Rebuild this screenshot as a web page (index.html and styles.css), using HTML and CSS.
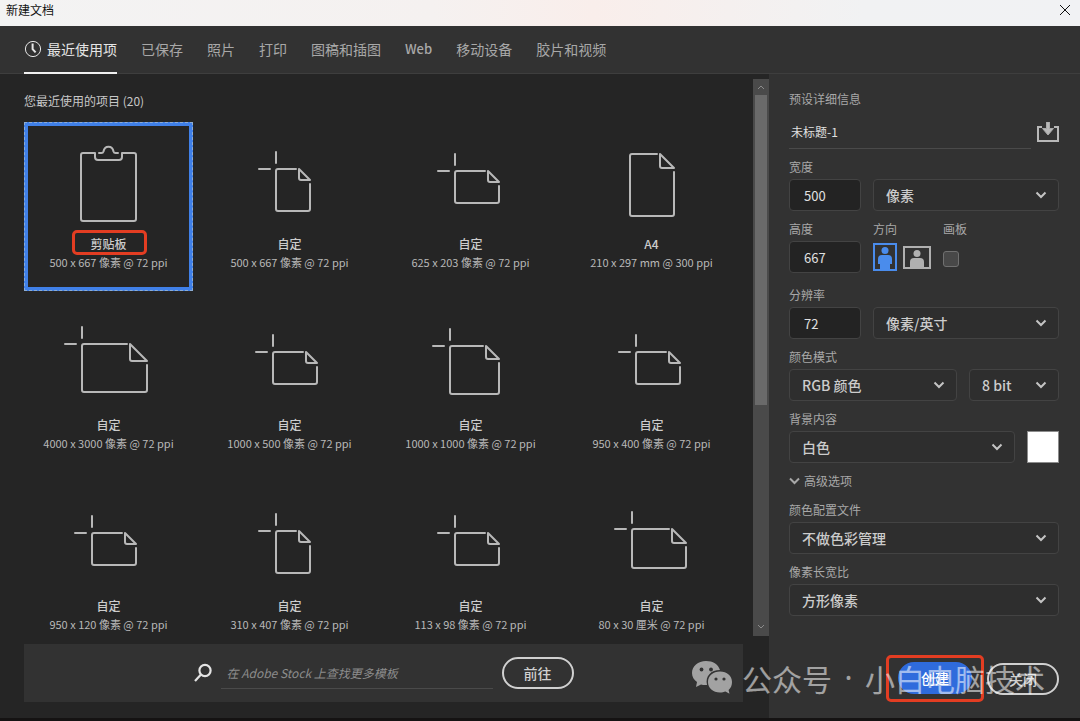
FILE: index.html
```html
<!DOCTYPE html>
<html lang="zh-CN">

<head>
    <title>新建文档</title>
    <meta charset="UTF-8">
    <meta name="viewport" content="width=device-width, initial-scale=1.0">
    <link rel="stylesheet" href="styles.css">
</head>

<body>
    <div class="window">
        <header class="titlebar">
            <span>新建文档</span>
            <button type="button" class="window-close" aria-label="关闭窗口">
                <svg width="12" height="12" viewBox="0 0 12 12"><path d="M1 1L11 11M11 1L1 11"/></svg>
            </button>
        </header>

        <nav class="tabs">
            <a href="#recent" class="tab active">
                <svg width="18" height="18" viewBox="0 0 18 18"><circle cx="9" cy="9" r="7.6"/><path d="M8.6 3.6V9.2L11.6 12.4" stroke-width="2"/></svg>
                最近使用项
            </a>
            <a href="#saved" class="tab">已保存</a>
            <a href="#photo" class="tab">照片</a>
            <a href="#print" class="tab">打印</a>
            <a href="#art" class="tab">图稿和插图</a>
            <a href="#web" class="tab latin">Web</a>
            <a href="#mobile" class="tab">移动设备</a>
            <a href="#film" class="tab">胶片和视频</a>
        </nav>

        <div class="content">
            <main class="main">
                <div class="scroller">
                    <section class="recent">
                        <h2>您最近使用的项目 (20)</h2>
                        <div id="presetGrid" class="preset-grid">
                            <button type="button" class="preset selected">
                                <svg class="preset-icon" viewBox="0 0 90 90">
                                    <path d="M31 13H19Q17 13 17 15V79Q17 81 19 81H70Q72 81 72 79V15Q72 13 70 13H58V17Q58 20 55 20H34Q31 20 31 17V13"/>
                                    <path d="M35 13H37.500Q39 13 39.500 11.500C40.500 5 48.500 5 49.500 11.500Q50 13 51.500 13H54"/>
                                </svg>
                                <span class="preset-name marked">剪贴板</span>
                                <span class="preset-size">500 x 667 像素 @ 72 ppi</span>
                            </button>
                        </div>
                    </section>
                    <div class="scrollbar">
                        <svg width="8" height="16" viewBox="0 0 8 16"><path d="M1 10L4 7L7 10"/></svg>
                        <div class="track"><div class="thumb"></div></div>
                        <svg width="8" height="16" viewBox="0 0 8 16"><path d="M1 5L4 8L7 5"/></svg>
                    </div>
                </div>

                <form class="search">
                    <svg width="18" height="20" viewBox="0 0 18 20"><circle cx="11" cy="7.500" r="5.600"/><path d="M7 11.500L1 18"/></svg>
                    <input type="text" aria-label="搜索模板" placeholder="在 Adobe Stock 上查找更多模板">
                    <button type="button" class="pill">前往</button>
                </form>
            </main>

            <aside class="details">
                <h3>预设详细信息</h3>
                <div class="doc-name">
                    <input type="text" aria-label="文档名称" value="未标题-1">
                    <button type="button" aria-label="保存预设">
                        <svg width="22" height="22" viewBox="0 0 22 22"><path d="M5 5H1V19H21V5H17" fill="none" stroke="#b8b8b8" stroke-width="2"/><path d="M9.500 0H12.500V6.500H16.500L11 13L5.500 6.500H9.500Z" fill="#b8b8b8"/></svg>
                    </button>
                </div>

                <div class="row">
                    <div class="field small">
                        <label for="width">宽度</label>
                        <input type="text" id="width" value="500">
                    </div>
                    <div class="field">
                        <select aria-label="单位">
                            <option>像素</option>
                        </select>
                    </div>
                </div>

                <div class="row height-row">
                    <div class="field small">
                        <label for="height">高度</label>
                        <input type="text" id="height" value="667">
                    </div>
                    <fieldset class="orientation">
                        <legend>方向</legend>
                        <div class="options">
                            <label class="portrait">
                                <input type="radio" name="orientation" aria-label="纵向" checked>
                                <svg width="24" height="28" viewBox="0 0 24 28"><rect x="1" y="1" width="22" height="26" fill="none" stroke="currentColor" stroke-width="2"/><circle cx="12" cy="7.500" r="3.500" fill="currentColor"/><path d="M5 16Q5 12 9 12H15Q19 12 19 16V21H17V27H7V21H5Z" fill="currentColor"/></svg>
                            </label>
                            <label class="landscape">
                                <input type="radio" name="orientation" aria-label="横向">
                                <svg width="28" height="23" viewBox="0 0 28 23"><rect x="1" y="1" width="26" height="21" fill="none" stroke="currentColor" stroke-width="2"/><circle cx="14" cy="7.500" r="3.500" fill="currentColor"/><path d="M7 22V16Q7 12 11 12H17Q21 12 21 16V22Z" fill="currentColor"/></svg>
                            </label>
                        </div>
                    </fieldset>
                    <div class="artboard">
                        <label for="artboard">画板</label>
                        <div class="options"><input type="checkbox" id="artboard"></div>
                    </div>
                </div>

                <div class="row">
                    <div class="field small">
                        <label for="resolution">分辨率</label>
                        <input type="text" id="resolution" value="72">
                    </div>
                    <div class="field">
                        <select aria-label="分辨率单位">
                            <option>像素/英寸</option>
                        </select>
                    </div>
                </div>

                <div class="row">
                    <div class="field">
                        <label for="mode">颜色模式</label>
                        <select id="mode">
                            <option>RGB 颜色</option>
                        </select>
                    </div>
                    <div class="field depth">
                        <select aria-label="位深度">
                            <option>8 bit</option>
                        </select>
                    </div>
                </div>

                <div class="row">
                    <div class="field">
                        <label for="background">背景内容</label>
                        <select id="background">
                            <option>白色</option>
                        </select>
                    </div>
                    <button type="button" class="swatch" aria-label="背景颜色"></button>
                </div>

                <button type="button" class="advanced">
                    <svg width="11" height="8" viewBox="0 0 11 8"><path d="M1 1.500L5.500 6L10 1.500"/></svg>
                    高级选项
                </button>

                <div class="row">
                    <div class="field">
                        <label for="profile">颜色配置文件</label>
                        <select id="profile">
                            <option>不做色彩管理</option>
                        </select>
                    </div>
                </div>

                <div class="row">
                    <div class="field">
                        <label for="ratio">像素长宽比</label>
                        <select id="ratio">
                            <option>方形像素</option>
                        </select>
                    </div>
                </div>

                <div class="actions">
                    <div class="create-mark"><button type="button" class="pill primary">创建</button></div>
                    <button type="button" class="pill">关闭</button>
                </div>
            </aside>
        </div>

        <div class="watermark">
            <svg width="42" height="36" viewBox="0 0 42 36">
                <path d="M15 1C7 1 1 6 1 13C1 17 3 20 6 22L5 27L10 24.500C12 25 14 25.300 16 25C14 16 20 10 29 10C27 4 22 1 15 1Z"/>
                <path d="M29 11.500C22 11.500 17 16 17 22C17 28 22 32.500 29 32.500C31 32.500 33 32 34.500 31.500L38.500 33.800L37.600 30C40 28 41 25 41 22C41 16 36 11.500 29 11.500Z"/>
                <g class="eyes"><circle cx="10.500" cy="9.500" r="1.900"/><circle cx="20" cy="9.500" r="1.900"/><circle cx="25" cy="19" r="1.600"/><circle cx="33" cy="19" r="1.600"/></g>
            </svg>
            <span>公众号</span><span class="dot">·</span><span>小白电脑技术</span>
        </div>
    </div>

    <script>
        // box: 左, 上, 右, 下, 折角大小
        const presets = [
            { name: '自定', size: '500 x 667 像素 @ 72 ppi', box: [31, 29, 65, 71, 11] },
            { name: '自定', size: '625 x 203 像素 @ 72 ppi', box: [29, 31, 73, 63, 11] },
            { name: 'A4', size: '210 x 297 mm @ 300 ppi', box: [23, 14, 67, 76, 14], plain: true },
            { name: '自定', size: '4000 x 3000 像素 @ 72 ppi', box: [18, 23, 83, 71, 17] },
            { name: '自定', size: '1000 x 500 像素 @ 72 ppi', box: [28, 31, 72, 63, 11] },
            { name: '自定', size: '1000 x 1000 像素 @ 72 ppi', box: [24, 25, 73, 73, 13] },
            { name: '自定', size: '950 x 400 像素 @ 72 ppi', box: [29, 31, 73, 63, 11] },
            { name: '自定', size: '950 x 120 像素 @ 72 ppi', box: [28, 31, 72, 63, 11] },
            { name: '自定', size: '310 x 407 像素 @ 72 ppi', box: [31, 29, 65, 71, 11] },
            { name: '自定', size: '113 x 98 像素 @ 72 ppi', box: [29, 31, 73, 63, 11] },
            { name: '自定', size: '80 x 30 厘米 @ 72 ppi', box: [25, 27, 79, 66, 14] }
        ];

        function iconPath(p) {
            const [l, t, r, b, f] = p.box;
            let d = `M${r - f - 3} ${t}H${l + 2}Q${l} ${t} ${l} ${t + 2}V${b - 2}Q${l} ${b} ${l + 2} ${b}H${r - 2}Q${r} ${b} ${r} ${b - 2}V${t + f + 4}`;
            // 折角
            d += `M${r - f} ${t}V${t + f - 2}Q${r - f} ${t + f} ${r - f + 2} ${t + f}H${r}Z`;
            // 十字线
            if (!p.plain) {
                d += `M${l} ${t - 17}V${t - 6}M${l - 17} ${t}H${l - 6}`;
            }
            return d;
        }

        const grid = document.getElementById('presetGrid');
        presets.forEach(p => {
            const card = document.createElement('button');
            card.type = 'button';
            card.className = 'preset';
            card.innerHTML = `<svg class="preset-icon" viewBox="0 0 90 90"><path d="${iconPath(p)}"/></svg>
                <span class="preset-name">${p.name}</span>
                <span class="preset-size">${p.size}</span>`;
            grid.appendChild(card);
        });
    </script>
</body>

</html>
```
FILE: styles.css
```css
* {
    box-sizing: border-box;
}

body {
    margin: 0;
    background: #111;
    color: #c8c8c8;
    font-family: "Noto Sans CJK SC", sans-serif;
    font-size: 12px;
    line-height: 18px;
}

button,
input,
select {
    margin: 0;
    padding: 0;
    border: 0;
    background: none;
    color: inherit;
    font: inherit;
}

svg {
    display: block;
    flex: none;
    fill: none;
    stroke: currentColor;
}

.window {
    position: relative;
    display: flex;
    flex-direction: column;
    height: 100vh;
    min-height: 700px;
    border-bottom: 3px solid #151313;
    background: #323232;
}

/* 标题栏 */
.titlebar {
    display: flex;
    justify-content: space-between;
    align-items: flex-start;
    height: 26px;
    flex: none;
    padding: 1px 9px 0 6px;
    background: linear-gradient(90deg, #f3f3f3 0%, #f5f1f0 40%, #f9eeeb 55%, #f1f2f3 80%, #f1f2f4 100%);
    color: #111;
}

.window-close {
    padding: 3px 0;
}

/* 标签 */
.tabs {
    display: flex;
    gap: 24px;
    flex: none;
    height: 48px;
    padding: 0 24px;
    border-bottom: 1px solid #3e3e3e;
    font-size: 14px;
}

.tab {
    display: flex;
    align-items: center;
    gap: 5px;
    height: 48px;
    border-bottom: 2px solid transparent;
    color: #a8a8a8;
    text-decoration: none;
    white-space: nowrap;
}

.tab.active {
    border-color: #f0f0f0;
    color: #e6e6e6;
}

.tab.latin {
    font-size: 13px;
    font-weight: 500;
}

.content {
    display: flex;
    flex: 1;
    min-height: 0;
}

.main {
    display: flex;
    flex-direction: column;
    flex: 1;
    min-width: 0;
    padding: 5px 0 16px 24px;
    background: #252525;
}

.scroller {
    display: flex;
    flex: 1;
    min-height: 0;
}

.recent {
    flex: 1;
    min-width: 0;
    padding: 13px 17px 0 0;
    overflow: hidden;
}

.recent h2 {
    margin: 0 0 12px;
    font-size: 12px;
    font-weight: 400;
}

.preset-grid {
    display: grid;
    grid-template-columns: repeat(4, 1fr);
    gap: 12px;
}

.preset {
    display: flex;
    flex-direction: column;
    align-items: center;
    height: 169px;
    padding-top: 14px;
    border: 4px solid transparent;
    color: #b8b8b8;
    white-space: nowrap;
}

.preset.selected {
    border-color: #4080e8;
    outline: 1px dashed #8cacd4;
    outline-offset: -1px;
}

.preset-icon {
    width: 90px;
    height: 90px;
    margin-bottom: 5px;
    stroke-width: 2;
    stroke-linecap: round;
    stroke-linejoin: round;
}

.preset-name {
    position: relative;
    color: #cccccc;
    font-weight: 500;
}

.preset-size {
    font-size: 11px;
}

.preset-name.marked::after {
    content: "";
    position: absolute;
    inset: -5px -20px -2px -18px;
    border: 3px solid #e33d22;
    border-radius: 5px;
}

/* 滚动条 */
.scrollbar {
    display: flex;
    flex-direction: column;
    align-items: center;
    width: 16px;
    background: #4a4a4a;
    color: #8c8c8c;
}

.track {
    flex: 1;
    width: 12px;
}

.thumb {
    height: 59%;
    background: #6a6a6a;
}

.search {
    display: flex;
    align-items: center;
    justify-content: center;
    gap: 9px;
    height: 58px;
    margin: 8px 26px 0 0;
    background: #323232;
}

.search svg {
    color: #e4e4e4;
    stroke-width: 2.2;
}

.search input {
    width: 272px;
    height: 32px;
    padding: 0 6px;
    border-bottom: 1px solid #4a4a4a;
}

.search input::placeholder {
    color: #8c8c8c;
    font-style: italic;
}

.pill {
    width: 72px;
    height: 32px;
    border: 2px solid #d0d0d0;
    border-radius: 16px;
    color: #d0d0d0;
    font-size: 14px;
    font-weight: 500;
}

/* 预设详细信息 */
.details {
    display: flex;
    flex-direction: column;
    gap: 9px;
    width: 311px;
    flex: none;
    padding: 16px 21px 16px 20px;
    color: #a8a8a8;
}

.details h3 {
    margin: 0;
    font-size: 12px;
    font-weight: 400;
}

.doc-name {
    display: flex;
    align-items: center;
    gap: 6px;
    height: 32px;
}

.doc-name input {
    flex: 1;
    min-width: 0;
    height: 32px;
    padding: 0 2px 3px;
    border-bottom: 1px solid #4a4a4a;
    color: #e0e0e0;
}

.row {
    display: flex;
    align-items: flex-end;
    gap: 12px;
}

.field {
    display: flex;
    flex-direction: column;
    flex: 1;
    gap: 3px;
}

.field.small {
    flex: 0 0 72px;
}

.field.depth {
    flex: 0 0 90px;
}

.field input,
.field select {
    width: 100%;
    height: 32px;
    padding: 0 12px;
    border: 1px solid #434343;
    border-radius: 4px;
    color: #cccccc;
    font-size: 14px;
}

.field input {
    padding: 0 14px;
    background: #232323;
    color: #e0e0e0;
    font-size: 13px;
}

.field select {
    appearance: none;
    background: #2e2e2e url("data:image/svg+xml,%3Csvg xmlns='http://www.w3.org/2000/svg' width='12' height='8'%3E%3Cpath d='M1.500 1.500L6 6L10.500 1.500' fill='none' stroke='%23c4c4c4' stroke-width='2'/%3E%3C/svg%3E") no-repeat right 11px center;
    font-weight: 500;
}

.height-row {
    margin-bottom: 4px;
}

.orientation {
    width: 58px;
    margin: 0;
    padding: 0;
    border: 0;
}

.orientation legend {
    padding: 0;
}

.options {
    display: flex;
    align-items: center;
    gap: 6px;
    height: 32px;
    margin-top: 3px;
}

.orientation label {
    color: #b0b0b0;
}

.orientation svg {
    stroke: none;
}

.orientation .portrait {
    color: #4a8cec;
}

.orientation input {
    position: absolute;
    opacity: 0;
}

.artboard input {
    appearance: none;
    width: 16px;
    height: 16px;
    margin-top: 4px;
    border: 1px solid #707070;
    border-radius: 3px;
    background: #484848;
}

.swatch {
    width: 32px;
    height: 32px;
    border: 1px solid #8c8c8c;
    background: #fff;
}

.advanced {
    display: flex;
    align-items: center;
    align-self: flex-start;
    gap: 4px;
    margin-bottom: 2px;
}

.advanced svg {
    stroke-width: 2;
}

.actions {
    display: flex;
    align-items: center;
    justify-content: flex-end;
    gap: 3px;
    margin-top: auto;
}

.create-mark {
    padding: 4px 9px 5px;
    border: 3px solid #e33d22;
    border-radius: 5px;
}

.create-mark .pill {
    display: block;
    width: 74px;
}

.pill.primary {
    border-color: #2f6bdc;
    background: #2f6bdc;
    color: #fff;
}

/* 水印 */
.watermark {
    position: absolute;
    right: 35px;
    bottom: 18px;
    display: flex;
    align-items: center;
    color: #fff;
    font-size: 30px;
    font-weight: 400;
    line-height: 44px;
    opacity: 0.55;
    pointer-events: none;
}

.watermark svg {
    margin-right: 9px;
    fill: #fff;
    stroke: none;
}

.watermark .eyes {
    fill: #323232;
}

.watermark .dot {
    width: 33px;
    font-family: "Noto Sans", sans-serif;
    text-align: center;
}
```
